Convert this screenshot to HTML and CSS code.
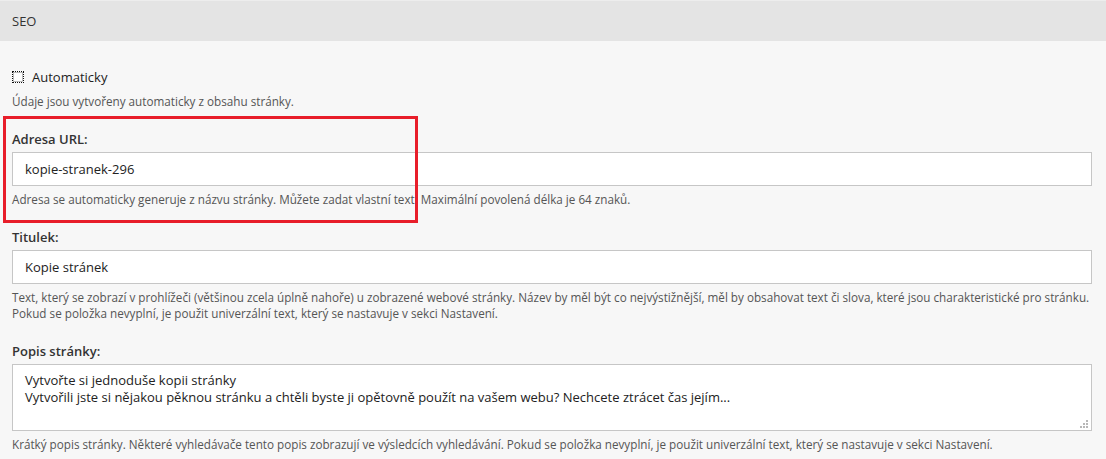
FILE: index.html
```html
<!DOCTYPE html>
<html lang="cs">
<head>
    <meta charset="UTF-8">
    <title>SEO</title>
    <link rel="stylesheet" href="styles.css">
</head>
<body>
    <div class="panel">
        <div class="panel-header">SEO</div>

        <div class="panel-body">
            <div class="field">
                <label class="check-row">
                    <input type="checkbox" class="check">
                    <span>Automaticky</span>
                </label>
                <div class="help">Údaje jsou vytvořeny automaticky z obsahu stránky.</div>
            </div>

            <div class="field">
                <label class="field-label" for="url">Adresa URL:</label>
                <input type="text" id="url" class="text-input" value="kopie-stranek-296">
                <div class="help">Adresa se automaticky generuje z názvu stránky. Můžete zadat vlastní text. Maximální povolená délka je 64 znaků.</div>
            </div>

            <div class="field">
                <label class="field-label" for="title">Titulek:</label>
                <input type="text" id="title" class="text-input" value="Kopie stránek">
                <div class="help">Text, který se zobrazí v prohlížeči (většinou zcela úplně nahoře) u zobrazené webové stránky. Název by měl být co nejvýstižnější, měl by obsahovat text či slova, které jsou charakteristické pro stránku. Pokud se položka nevyplní, je použit univerzální text, který se nastavuje v sekci Nastavení.</div>
            </div>

            <div class="field">
                <label class="field-label" for="desc">Popis stránky:</label>
                <div class="area-wrap">
                    <textarea id="desc" class="text-area">Vytvořte si jednoduše kopii stránky
Vytvořili jste si nějakou pěknou stránku a chtěli byste ji opětovně použít na vašem webu? Nechcete ztrácet čas jejím...</textarea>
                    <svg class="grip" width="8" height="8" viewBox="0 0 8 8">
                        <rect x="6" y="0" width="2" height="2"/>
                        <rect x="3" y="3" width="2" height="2"/>
                        <rect x="6" y="3" width="2" height="2"/>
                        <rect x="0" y="6" width="2" height="2"/>
                        <rect x="3" y="6" width="2" height="2"/>
                        <rect x="6" y="6" width="2" height="2"/>
                    </svg>
                </div>
                <div class="help">Krátký popis stránky. Některé vyhledávače tento popis zobrazují ve výsledcích vyhledávání. Pokud se položka nevyplní, je použit univerzální text, který se nastavuje v sekci Nastavení.</div>
            </div>
        </div>

        <!-- annotation frame around the URL field -->
        <div class="highlight"></div>
    </div>
</body>
</html>
```

FILE: styles.css
```css
body {
    margin: 0;
    padding: 0;
    background: #f7f7f7;
    font-family: "Open Sans", Arial, sans-serif;
    font-size: 13px;
    color: #222;
    overflow: hidden;
}

.panel {
    position: relative;
}

.panel-header {
    height: 40px;
    line-height: 40px;
    padding: 0 12px;
    background: #e4e4e4;
    border-top: 1px solid #ededed;
    color: #333;
}

.panel-body {
    padding: 27px 14px 0 12px;
}

.field {
    margin-bottom: 21px;
}

.check-row {
    display: flex;
    align-items: center;
    gap: 8px;
    line-height: 18px;
    color: #222;
}

.check {
    appearance: none;
    -webkit-appearance: none;
    margin: 0;
    width: 12px;
    height: 12px;
    border: 1px dotted #111;
    background: #fff;
    box-shadow: inset 0 0 0 1px #bbb;
}

.field-label {
    display: block;
    font-weight: 600;
    color: #333;
    line-height: 18px;
    margin-bottom: 4px;
}

.text-input,
.text-area {
    display: block;
    box-sizing: border-box;
    width: 100%;
    margin: 0;
    border: 1px solid #c6c6c6;
    background: #fff;
    font-family: "Open Sans", Arial, sans-serif;
    font-size: 13px;
    color: #222;
    outline: none;
}

.text-input {
    height: 34px;
    padding: 0 12px;
}

.area-wrap {
    position: relative;
}

.text-area {
    height: 67px;
    padding: 7px 12px;
    line-height: 17px;
    resize: none;
}

.grip {
    position: absolute;
    right: 4px;
    bottom: 3px;
    fill: #b8b8b8;
}

.help {
    margin-top: 5px;
    font-size: 11.7px;
    line-height: 16px;
    color: #555;
}

.check-row + .help {
    margin-top: 7px;
}

.highlight {
    position: absolute;
    left: 3px;
    top: 116px;
    width: 409px;
    height: 101px;
    border: 3px solid #e81e2a;
    pointer-events: none;
}
```
